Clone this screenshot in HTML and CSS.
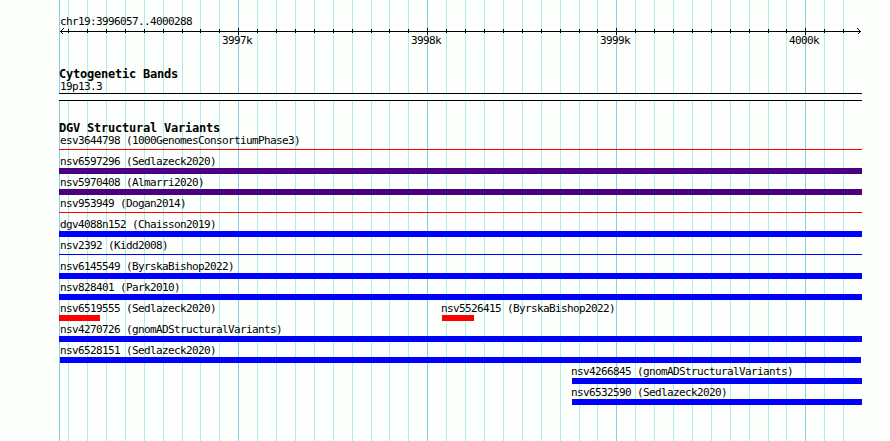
FILE: index.html
```
<!DOCTYPE html>
<html lang="en">
<head>
    <meta charset="UTF-8">
    <title>chr19:3996057..4000288</title>
    <link rel="stylesheet" href="styles.css">
</head>
<body>
    <div class="browser">
        <svg class="grid" width="890" height="441" shape-rendering="crispEdges">
            <path class="minor" d="M68.5 0v441M87.5 0v441M106.5 0v441M125.5 0v441M144.5 0v441M163.5 0v441M182.5 0v441M200.5 0v441M219.5 0v441M257.5 0v441M276.5 0v441M295.5 0v441M314.5 0v441M333.5 0v441M352.5 0v441M371.5 0v441M389.5 0v441M408.5 0v441M446.5 0v441M465.5 0v441M484.5 0v441M503.5 0v441M522.5 0v441M541.5 0v441M560.5 0v441M579.5 0v441M597.5 0v441M635.5 0v441M654.5 0v441M673.5 0v441M692.5 0v441M711.5 0v441M730.5 0v441M749.5 0v441M768.5 0v441M786.5 0v441M824.5 0v441M843.5 0v441"/>
            <path class="major" d="M59.5 0v441M238.5 0v441M427.5 0v441M616.5 0v441M805.5 0v441"/>
        </svg>

        <main class="tracks">
            <section class="ruler">
                <div class="label">chr19:3996057..4000288</div>
                <svg class="axis" width="803" height="7" shape-rendering="crispEdges">
                    <path d="M1 3.5h801M9.5 1v4M28.5 1v4M47.5 1v4M66.5 1v4M85.5 1v4M104.5 1v4M123.5 1v4M141.5 1v4M160.5 1v4M198.5 1v4M217.5 1v4M236.5 1v4M255.5 1v4M274.5 1v4M293.5 1v4M312.5 1v4M330.5 1v4M349.5 1v4M387.5 1v4M406.5 1v4M425.5 1v4M444.5 1v4M463.5 1v4M482.5 1v4M501.5 1v4M520.5 1v4M538.5 1v4M576.5 1v4M595.5 1v4M614.5 1v4M633.5 1v4M652.5 1v4M671.5 1v4M690.5 1v4M709.5 1v4M727.5 1v4M765.5 1v4M784.5 1v4"/>
                    <path d="M179.5 0v7M368.5 0v7M557.5 0v7M746.5 0v7"/>
                    <path class="arrow" d="M4.5 .5l-3 3 3 3M798.5 .5l3 3-3 3"/>
                </svg>
                <div class="scale">
                    <span>3997k</span>
                    <span>3998k</span>
                    <span>3999k</span>
                    <span>4000k</span>
                </div>
            </section>

            <section class="cytoband">
                <h2>Cytogenetic Bands</h2>
                <div class="label">19p13.3</div>
                <div class="band"></div>
            </section>

            <section class="variants">
                <h2>DGV Structural Variants</h2>
                <div class="row"><div class="variant thin red"><span class="label">esv3644798 (1000GenomesConsortiumPhase3)</span></div></div>
                <div class="row"><div class="variant purple"><span class="label">nsv6597296 (Sedlazeck2020)</span></div></div>
                <div class="row"><div class="variant purple"><span class="label">nsv5970408 (Almarri2020)</span></div></div>
                <div class="row"><div class="variant thin red"><span class="label">nsv953949 (Dogan2014)</span></div></div>
                <div class="row"><div class="variant blue"><span class="label">dgv4088n152 (Chaisson2019)</span></div></div>
                <div class="row"><div class="variant thin blue"><span class="label">nsv2392 (Kidd2008)</span></div></div>
                <div class="row"><div class="variant blue"><span class="label">nsv6145549 (ByrskaBishop2022)</span></div></div>
                <div class="row"><div class="variant blue"><span class="label">nsv828401 (Park2010)</span></div></div>
                <div class="row split">
                    <div class="variant red"><span class="label">nsv6519555 (Sedlazeck2020)</span></div>
                    <div class="variant red"><span class="label">nsv5526415 (ByrskaBishop2022)</span></div>
                </div>
                <div class="row"><div class="variant blue"><span class="label">nsv4270726 (gnomADStructuralVariants)</span></div></div>
                <div class="row inset"><div class="variant blue"><span class="label">nsv6528151 (Sedlazeck2020)</span></div></div>
                <div class="row late"><div class="variant blue"><span class="label">nsv4266845 (gnomADStructuralVariants)</span></div></div>
                <div class="row late"><div class="variant blue"><span class="label">nsv6532590 (Sedlazeck2020)</span></div></div>
            </section>
        </main>
    </div>
</body>
</html>
```
FILE: styles.css
```
body {
    margin: 0;
    background: #fcfffc;
    color: black;
    font-family: "DejaVu Sans Mono", monospace;
    font-size: 11px;
    letter-spacing: -0.62px;
    line-height: 13px;
}
.browser {
    display: grid;
    width: 890px;
    height: 441px;
    overflow: hidden;
}
.grid, .tracks {
    grid-area: 1 / 1;
}
.grid path {
    fill: none;
}
.minor {
    stroke: #afeeee;
}
.major {
    stroke: #87ceeb;
}
.tracks {
    z-index: 1;
    width: 803px;
    padding: 15px 0 0 59px;
}
.label {
    display: block;
    height: 13px;
    padding-left: 1px;
    white-space: nowrap;
}
h2 {
    height: 13px;
    margin: 0;
    font-size: 12px;
    letter-spacing: -0.22px;
}

/* ruler */
.ruler {
    height: 53px;
}
.axis {
    display: block;
}
.axis path {
    fill: none;
    stroke: black;
}
.scale {
    display: flex;
    gap: 159px;
    height: 13px;
    padding-left: 163px;
    margin-top: -1px;
}
.scale span {
    width: 30px;
}

/* cytogenetic band */
.cytoband {
    height: 54px;
}
.cytoband .label {
    margin-top: -1px;
}
.band {
    height: 6px;
    border-top: 1px solid black;
    border-bottom: 1px solid black;
    background: #fcfffc;
}

/* variants */
.variants h2 {
    height: 12px;
}
.row {
    display: flex;
    height: 21px;
}
.variant {
    width: 100%;
    height: 13px;
    border-bottom: 6px solid;
}
.variant .label {
    color: black;
}
.thin {
    height: 15px;
    border-bottom-width: 1px;
}
.red {
    border-color: red;
}
.blue {
    border-color: blue;
}
.purple {
    border-color: indigo;
}
.split {
    gap: 342px;
}
.split .variant:first-child {
    width: 41px;
}
.split .variant:last-child {
    width: 32px;
}
.split .variant:last-child .label,
.late .label {
    padding-left: 0;
    margin-left: -1px;
}
.inset {
    padding: 0 1px;
}
.inset .label {
    padding-left: 0;
}
.late {
    padding-left: 513px;
}
```
